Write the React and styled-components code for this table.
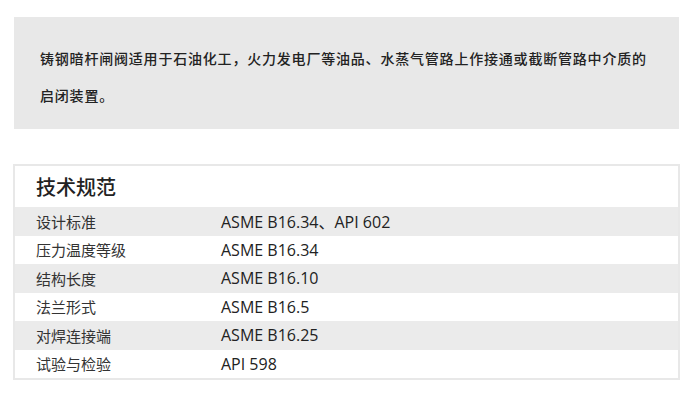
import React from 'react';
import styled, { createGlobalStyle } from 'styled-components';

const specs = [
  ['设计标准', 'ASME B16.34、API 602'],
  ['压力温度等级', 'ASME B16.34'],
  ['结构长度', 'ASME B16.10'],
  ['法兰形式', 'ASME B16.5'],
  ['对焊连接端', 'ASME B16.25'],
  ['试验与检验', 'API 598'],
];

const App = () => {
  return (
    <Page>
      <Intro>
        铸钢暗杆闸阀适用于石油化工，火力发电厂等油品、水蒸气管路上作接通或截断管路中介质的
        <br />
        启闭装置。
      </Intro>

      <SpecTable>
        <Title>技术规范</Title>
        {specs.map(([label, value], i) => (
          <SpecRow key={label} shaded={i % 2 === 0}>
            <Label>{label}</Label>
            <Value>{value}</Value>
          </SpecRow>
        ))}
      </SpecTable>
    </Page>
  );
};

const GlobalStyle = createGlobalStyle`
  body {
    margin: 0;
    background: #fff;
  }
`;

const Page = styled.div`
  width: 700px;
  padding: 17px 21px 0 13px;
  box-sizing: border-box;
  display: flex;
  flex-direction: column;
  font-family: 'Noto Sans CJK SC', sans-serif;
  color: #333;
`;

const Intro = styled.p`
  margin: 0 0 0 1px;
  width: 665px;
  box-sizing: border-box;
  background: #e8e8e8;
  padding: 23px 10px 15px 26px;
  font-size: 14px;
  font-weight: 500;
  letter-spacing: 0.8px;
  line-height: 37px;
  color: #222;
  white-space: nowrap;
`;

const SpecTable = styled.div`
  margin-top: 35px;
  width: 667px;
  box-sizing: border-box;
  border: 2px solid #e8e8e8;
  display: flex;
  flex-direction: column;
`;

const Title = styled.h2`
  margin: 0;
  height: 41px;
  padding-left: 21px;
  display: flex;
  align-items: center;
  font-size: 20px;
  font-weight: 500;
  color: #222;
`;

const SpecRow = styled.div`
  display: grid;
  grid-template-columns: 185px 1fr;
  align-items: center;
  height: 28.5px;
  padding-left: 21px;
  background: ${(p) => (p.shaded ? '#ebebeb' : '#fff')};
`;

const Label = styled.span`
  font-size: 15px;
  color: #333;
`;

const Value = styled.span`
  font-family: 'Open Sans', 'Noto Sans CJK SC', sans-serif;
  font-size: 16px;
  color: #222;
`;

const Root = () => (
  <>
    <GlobalStyle />
    <App />
  </>
);

export default Root;
